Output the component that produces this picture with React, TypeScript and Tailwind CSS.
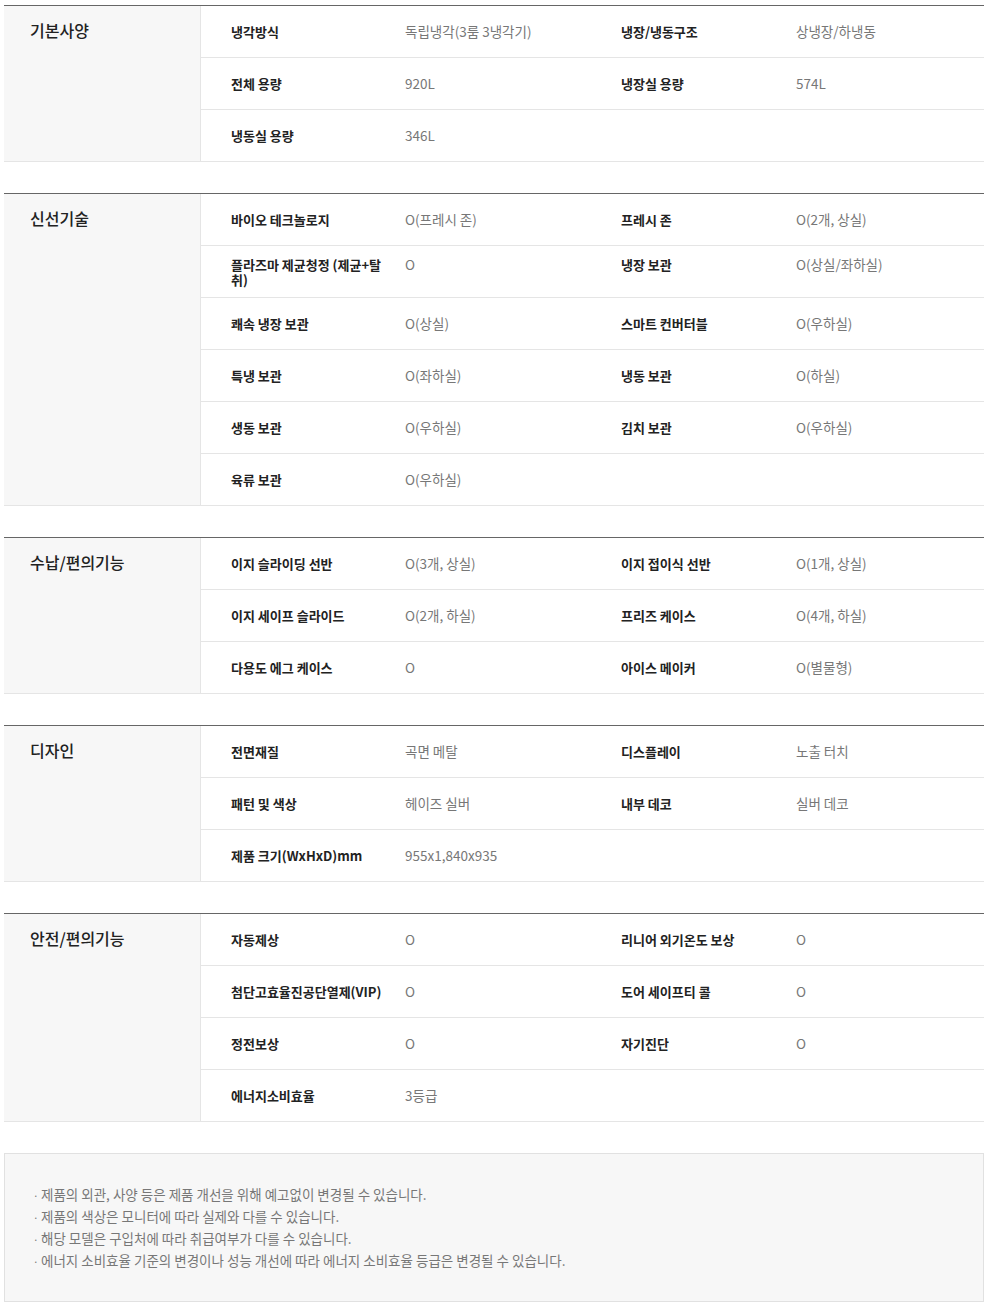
type SpecRow = {
  label: string;
  value: string;
  label2?: string;
  value2?: string;
  wrap?: boolean;
};

type Section = {
  title: string;
  rows: SpecRow[];
};

const sections: Section[] = [
  {
    title: "기본사양",
    rows: [
      { label: "냉각방식", value: "독립냉각(3룸 3냉각기)", label2: "냉장/냉동구조", value2: "상냉장/하냉동" },
      { label: "전체 용량", value: "920L", label2: "냉장실 용량", value2: "574L" },
      { label: "냉동실 용량", value: "346L" },
    ],
  },
  {
    title: "신선기술",
    rows: [
      { label: "바이오 테크놀로지", value: "O(프레시 존)", label2: "프레시 존", value2: "O(2개, 상실)" },
      { label: "플라즈마 제균청정 (제균+탈취)", value: "O", label2: "냉장 보관", value2: "O(상실/좌하실)", wrap: true },
      { label: "쾌속 냉장 보관", value: "O(상실)", label2: "스마트 컨버터블", value2: "O(우하실)" },
      { label: "특냉 보관", value: "O(좌하실)", label2: "냉동 보관", value2: "O(하실)" },
      { label: "생동 보관", value: "O(우하실)", label2: "김치 보관", value2: "O(우하실)" },
      { label: "육류 보관", value: "O(우하실)" },
    ],
  },
  {
    title: "수납/편의기능",
    rows: [
      { label: "이지 슬라이딩 선반", value: "O(3개, 상실)", label2: "이지 접이식 선반", value2: "O(1개, 상실)" },
      { label: "이지 세이프 슬라이드", value: "O(2개, 하실)", label2: "프리즈 케이스", value2: "O(4개, 하실)" },
      { label: "다용도 에그 케이스", value: "O", label2: "아이스 메이커", value2: "O(별물형)" },
    ],
  },
  {
    title: "디자인",
    rows: [
      { label: "전면재질", value: "곡면 메탈", label2: "디스플레이", value2: "노출 터치" },
      { label: "패턴 및 색상", value: "헤이즈 실버", label2: "내부 데코", value2: "실버 데코" },
      { label: "제품 크기(WxHxD)mm", value: "955x1,840x935" },
    ],
  },
  {
    title: "안전/편의기능",
    rows: [
      { label: "자동제상", value: "O", label2: "리니어 외기온도 보상", value2: "O" },
      { label: "첨단고효율진공단열제(VIP)", value: "O", label2: "도어 세이프티 콜", value2: "O" },
      { label: "정전보상", value: "O", label2: "자기진단", value2: "O" },
      { label: "에너지소비효율", value: "3등급" },
    ],
  },
];

const notes = [
  "제품의 외관, 사양 등은 제품 개선을 위해 예고없이 변경될 수 있습니다.",
  "제품의 색상은 모니터에 따라 실제와 다를 수 있습니다.",
  "해당 모델은 구입처에 따라 취급여부가 다를 수 있습니다.",
  "에너지 소비효율 기준의 변경이나 성능 개선에 따라 에너지 소비효율 등급은 변경될 수 있습니다.",
];

function Row({ row }: { row: SpecRow }) {
  // values line up with the first line of a wrapped label
  const cell = row.wrap ? "self-start pt-[11px] leading-[15px]" : "leading-[15px]";

  return (
    <div className="grid h-[52px] grid-cols-[204px_216px_175px_1fr] items-center border-b border-[#e5e5e5]">
      <div className="pl-[30px] pr-[14px] text-[13px] font-bold leading-[15px] text-[#222]">{row.label}</div>
      <div className={`text-[13.5px] text-[#777] ${cell}`}>{row.value}</div>
      <div className={`text-[13px] font-bold text-[#222] ${cell}`}>{row.label2}</div>
      <div className={`text-[13.5px] text-[#777] ${cell}`}>{row.value2}</div>
    </div>
  );
}

export default function App() {
  return (
    <div
      className="min-h-[1308px] bg-white px-[4px] pt-[5px]"
      style={{ fontFamily: '"Noto Sans CJK KR", "Noto Sans", sans-serif' }}
    >
      <div className="space-y-[31px]">
        {sections.map((section) => (
          <div key={section.title} className="flex border-t border-[#666]">
            <div className="w-[197px] shrink-0 border-r border-b border-[#e5e5e5] bg-[#f7f7f7] pl-[26px] pt-[14px] text-[16px] font-medium leading-[20px] text-[#222]">
              {section.title}
            </div>
            <div className="flex-1">
              {section.rows.map((row) => (
                <Row key={row.label} row={row} />
              ))}
            </div>
          </div>
        ))}

        <div className="border border-[#e1e1e1] bg-[#f7f7f7] pb-[30px] pl-[28px] pt-[29px]">
          {notes.map((note) => (
            <p key={note} className="h-[22px] text-[13.5px] leading-[22px] text-[#777]">
              <span className="mr-[2px] inline-block w-[6px] text-[10px] leading-none">·</span>
              {note}
            </p>
          ))}
        </div>
      </div>
    </div>
  );
}
